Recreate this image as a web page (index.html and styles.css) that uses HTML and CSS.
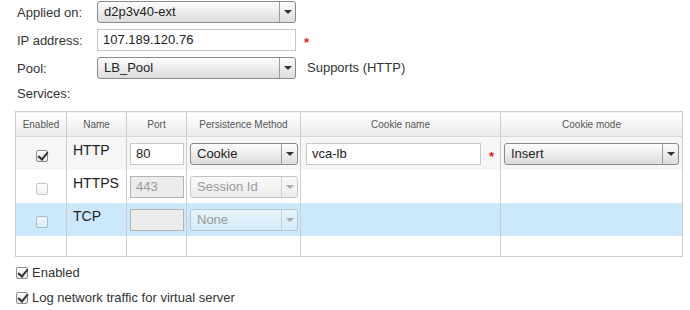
FILE: index.html
```html
<!DOCTYPE html>
<html>
<head>
	<title>Virtual Server</title>
	<link rel="stylesheet" href="styles.css">
</head>
<body>

	<div class="form">
		<div class="form-row">
			<label class="form-label">Applied on:</label>
			<div class="select">
				<span class="select-text">d2p3v40-ext</span>
				<span class="select-arrow"></span>
			</div>
		</div>
		<div class="form-row">
			<label class="form-label">IP address:</label>
			<div class="text-input wide">107.189.120.76</div>
			<span class="required">*</span>
		</div>
		<div class="form-row">
			<label class="form-label">Pool:</label>
			<div class="select">
				<span class="select-text">LB_Pool</span>
				<span class="select-arrow"></span>
			</div>
			<span class="note">Supports (HTTP)</span>
		</div>
		<div class="section-label">Services:</div>
	</div>

	<table class="services">
		<thead>
			<tr>
				<th class="col-enabled">Enabled</th>
				<th class="col-name">Name</th>
				<th class="col-port">Port</th>
				<th class="col-method">Persistence Method</th>
				<th class="col-cookie">Cookie name</th>
				<th class="col-mode">Cookie mode</th>
			</tr>
		</thead>
		<tbody>
			<tr class="row-active">
				<td class="cell-check"><span class="check checked"></span></td>
				<td class="cell-name">HTTP</td>
				<td><div class="text-input port">80</div></td>
				<td><div class="select method"><span class="select-text">Cookie</span><span class="select-arrow"></span></div></td>
				<td><div class="cookie-wrap"><div class="text-input cookie">vca-lb</div><span class="required">*</span></div></td>
				<td><div class="select mode"><span class="select-text">Insert</span><span class="select-arrow"></span></div></td>
			</tr>
			<tr>
				<td class="cell-check"><span class="check disabled"></span></td>
				<td class="cell-name">HTTPS</td>
				<td><div class="text-input port disabled">443</div></td>
				<td><div class="select method disabled"><span class="select-text">Session Id</span><span class="select-arrow"></span></div></td>
				<td></td>
				<td></td>
			</tr>
			<tr class="row-selected">
				<td class="cell-check"><span class="check disabled"></span></td>
				<td class="cell-name">TCP</td>
				<td><div class="text-input port disabled"></div></td>
				<td><div class="select method disabled"><span class="select-text">None</span><span class="select-arrow"></span></div></td>
				<td></td>
				<td></td>
			</tr>
			<tr class="row-empty">
				<td></td><td></td><td></td><td></td><td></td><td></td>
			</tr>
		</tbody>
	</table>

	<div class="options">
		<label class="option"><span class="check checked"></span>Enabled</label>
		<label class="option"><span class="check checked"></span>Log network traffic for virtual server</label>
	</div>

</body>
</html>
```

FILE: styles.css
```css
*{
	box-sizing: border-box;
}
body{
	margin: 0;
	background-color: #fff;
	color: #333;
	font-family: "Liberation Sans", Arial, sans-serif;
	font-size: 13px;
}
.form{
	padding: 1px 0 0 17px;
}
.form-row{
	display: flex;
	align-items: center;
	height: 22px;
	margin-bottom: 6px;
}
.form-label{
	width: 80px;
}
.section-label{
	padding-top: 1px;
	height: 26px;
}

/* inputs */
.text-input{
	height: 22px;
	border: 1px solid #c8c8c8;
	background-color: #fff;
	padding: 0 5px;
	line-height: 20px;
	color: #222;
}
.text-input.wide{
	width: 199px;
}
.text-input.disabled{
	background-color: #ececec;
	border-color: #b4b4b4;
	color: #999;
}
.select{
	display: flex;
	width: 199px;
	height: 22px;
	border: 1px solid #8a8a8a;
	border-radius: 3px;
	background-image: linear-gradient(#fdfdfd, #dcdcdc);
	color: #222;
}
.select-text{
	flex: 1;
	padding-left: 6px;
	line-height: 20px;
}
.select-arrow{
	position: relative;
	width: 16px;
	border-left: 1px solid #9a9a9a;
}
.select-arrow::after{
	content: "";
	position: absolute;
	left: 4px;
	top: 8px;
	border-left: 4px solid transparent;
	border-right: 4px solid transparent;
	border-top: 4px solid #333;
}
.select.disabled{
	border-color: #c4c4c4;
	background-image: linear-gradient(#fafafa, #ececec);
	color: #999;
}
.row-selected .select.disabled{
	background-image: linear-gradient(#e6f4fc, #d4ebf8);
	border-color: #b4c8d4;
}
.select.disabled .select-arrow{
	border-left-color: #d0d0d0;
}
.select.disabled .select-arrow::after{
	border-top-color: #aaa;
}
.required{
	color: #e8141e;
	font-weight: bold;
	font-size: 13px;
	margin-left: 8px;
	padding-top: 4px;
}
.note{
	margin-left: 11px;
	padding-bottom: 2px;
}

/* services table */
.services{
	margin-left: 15px;
	border-collapse: collapse;
	table-layout: fixed;
	width: 667px;
}
.services th,
.services td{
	border: 1px solid #cdcdcd;
	padding: 0;
}
.services td{
	border-top: none;
	border-bottom: none;
	vertical-align: top;
	padding: 6px 3px 0;
}
.services tbody tr:last-child td{
	border-bottom: 1px solid #cdcdcd;
}
.services th{
	height: 25px;
	font-weight: normal;
	font-size: 10px;
	color: #555;
	background-image: linear-gradient(#fff, #ebebeb);
	border-bottom-color: #d8d8d8;
}
.col-enabled{ width: 51px; }
.col-name{ width: 60px; }
.col-port{ width: 60px; }
.col-method{ width: 114px; }
.col-cookie{ width: 200px; }
.col-mode{ width: 182px; }

.services tbody tr{
	height: 33px;
}
.services tr.row-empty{
	height: 21px;
}
.row-active{
	background-color: #f6f6f6;
}
.row-selected{
	background-color: #cbe9fb;
}
.cell-check{
	text-align: center;
}
.cell-check .check{
	margin: 7px 0 0 1px;
}
.services td.cell-name{
	padding: 5px 0 0 6px;
	font-size: 14px;
	color: #222;
}
.text-input.port{
	width: 54px;
}
.select.method{
	width: 108px;
}
.select.mode{
	width: 175px;
}
.cookie-wrap{
	display: flex;
	align-items: center;
	padding-left: 2px;
}
.text-input.cookie{
	width: 175px;
}
.cookie-wrap .required{
	margin-left: 8px;
}

/* checkboxes */
.check{
	display: inline-block;
	position: relative;
	width: 12px;
	height: 12px;
	border: 1px solid #8e8e8e;
	border-radius: 2px;
	background-image: linear-gradient(#fff, #e6e6e6);
	vertical-align: top;
}
.check.disabled{
	border-color: #c8c8c8;
	background-image: linear-gradient(#fdfdfd, #f0f0f0);
}
.row-selected .check.disabled{
	border-color: #a8bcc8;
	background-image: linear-gradient(#eef7fd, #dcedf8);
}
.check.checked::after{
	content: "";
	position: absolute;
	left: 3px;
	top: -1px;
	width: 4px;
	height: 8px;
	border-right: 2px solid #333;
	border-bottom: 2px solid #333;
	transform: rotate(40deg);
}

.options{
	padding: 9px 0 0 16px;
}
.option{
	display: flex;
	align-items: center;
	gap: 4px;
	height: 13px;
	margin-bottom: 12px;
}
```
